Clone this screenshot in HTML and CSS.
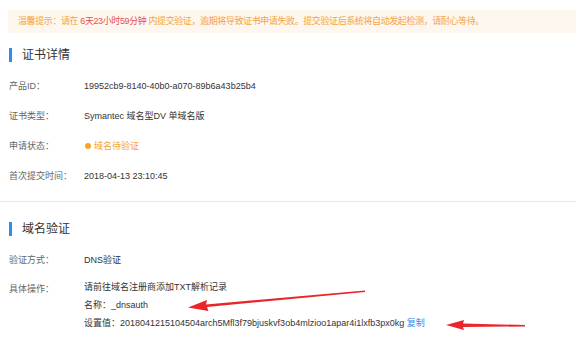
FILE: index.html
```html
<!DOCTYPE html>
<html lang="zh-CN">
<head>
  <meta charset="UTF-8" />
  <meta name="viewport" content="width=device-width, initial-scale=1.0"/>
  <title>证书详情</title>
  <link rel="stylesheet" href="styles.css">
</head>
<body>

  <!-- Notice -->
  <div class="notice">
    温馨提示：请在 <span class="countdown">6天23小时59分钟</span> 内提交验证，逾期将导致证书申请失败。提交验证后系统将自动发起检测，请耐心等待。
  </div>

  <!-- Certificate details -->
  <div class="section">
    <h3 class="title">证书详情</h3>
    <div class="row"><div class="label">产品ID：</div><div class="value">19952cb9-8140-40b0-a070-89b6a43b25b4</div></div>
    <div class="row"><div class="label">证书类型：</div><div class="value">Symantec 域名型DV 单域名版</div></div>
    <div class="row"><div class="label">申请状态：</div><div class="value status"><span class="dot"></span>域名待验证</div></div>
    <div class="row"><div class="label">首次提交时间：</div><div class="value">2018-04-13 23:10:45</div></div>
  </div>

  <div class="divider"></div>

  <!-- Domain validation -->
  <div class="section">
    <h3 class="title">域名验证</h3>
    <div class="row"><div class="label">验证方式：</div><div class="value">DNS验证</div></div>
    <div class="row multi">
      <div class="label">具体操作：</div>
      <div class="value">
        <div>请前往域名注册商添加TXT解析记录</div>
        <div>名称：_dnsauth</div>
        <div>设置值：2018041215104504arch5Mfl3f79bjuskvf3ob4mlzioo1apar4i1lxfb3px0kg <a href="#" class="copy">复制</a></div>
      </div>
    </div>
  </div>

  <!-- annotation arrows -->
  <svg class="arrows" width="576" height="338" viewBox="0 0 576 338">
    <path d="M365 290.5 L206 304.5 L207 300 L188 307.5 L208.5 311 L207 307 L365 292 Z" fill="#e8262b"/>
    <path d="M525 325 L463 323.5 L464 320 L446 325 L464 330 L463 327 L525 326.5 Z" fill="#e8262b"/>
  </svg>

</body>
</html>
```

FILE: styles.css
```css
* {
  margin: 0;
  padding: 0;
  box-sizing: border-box;
}

body {
  font-family: "Liberation Sans", "Noto Sans CJK SC", sans-serif;
  font-size: 9px;
  color: #333;
  background-color: #fff;
  position: relative;
  width: 576px;
  height: 338px;
  overflow: hidden;
}

.notice {
  margin: 10px 0 0 8px;
  height: 23px;
  line-height: 23px;
  padding-left: 10px;
  background-color: #fdf7f0;
  color: #f5a340;
  white-space: nowrap;
  letter-spacing: -0.4px;
}

.countdown {
  color: #ea4f4f;
}

.section {
  padding-left: 9px;
}

.title {
  margin-top: 15px;
  margin-bottom: 9px;
  border-left: 3px solid #2d8cf0;
  padding-left: 10px;
  font-size: 12px;
  line-height: 14px;
  font-weight: normal;
  color: #333;
}

.divider + .section .title {
  margin-top: 20px;
}

.row {
  display: grid;
  grid-template-columns: 75px 1fr;
  height: 30px;
  line-height: 30px;
}

.label {
  color: #666;
}

.status {
  color: #f5a623;
  display: flex;
  align-items: center;
}

.dot {
  width: 6px;
  height: 6px;
  border-radius: 50%;
  background-color: #f5a623;
  margin: 0 3px 0 1px;
}

.row.multi {
  height: auto;
  line-height: 18px;
  padding-top: 3px;
}

.row.multi .label {
  line-height: 22px;
}

.copy {
  color: #2d8cf0;
  text-decoration: none;
}

.divider {
  margin-top: 10px;
  height: 1px;
  background-color: #e8e8e8;
}

.arrows {
  position: absolute;
  left: 0;
  top: 0;
  pointer-events: none;
}
```
